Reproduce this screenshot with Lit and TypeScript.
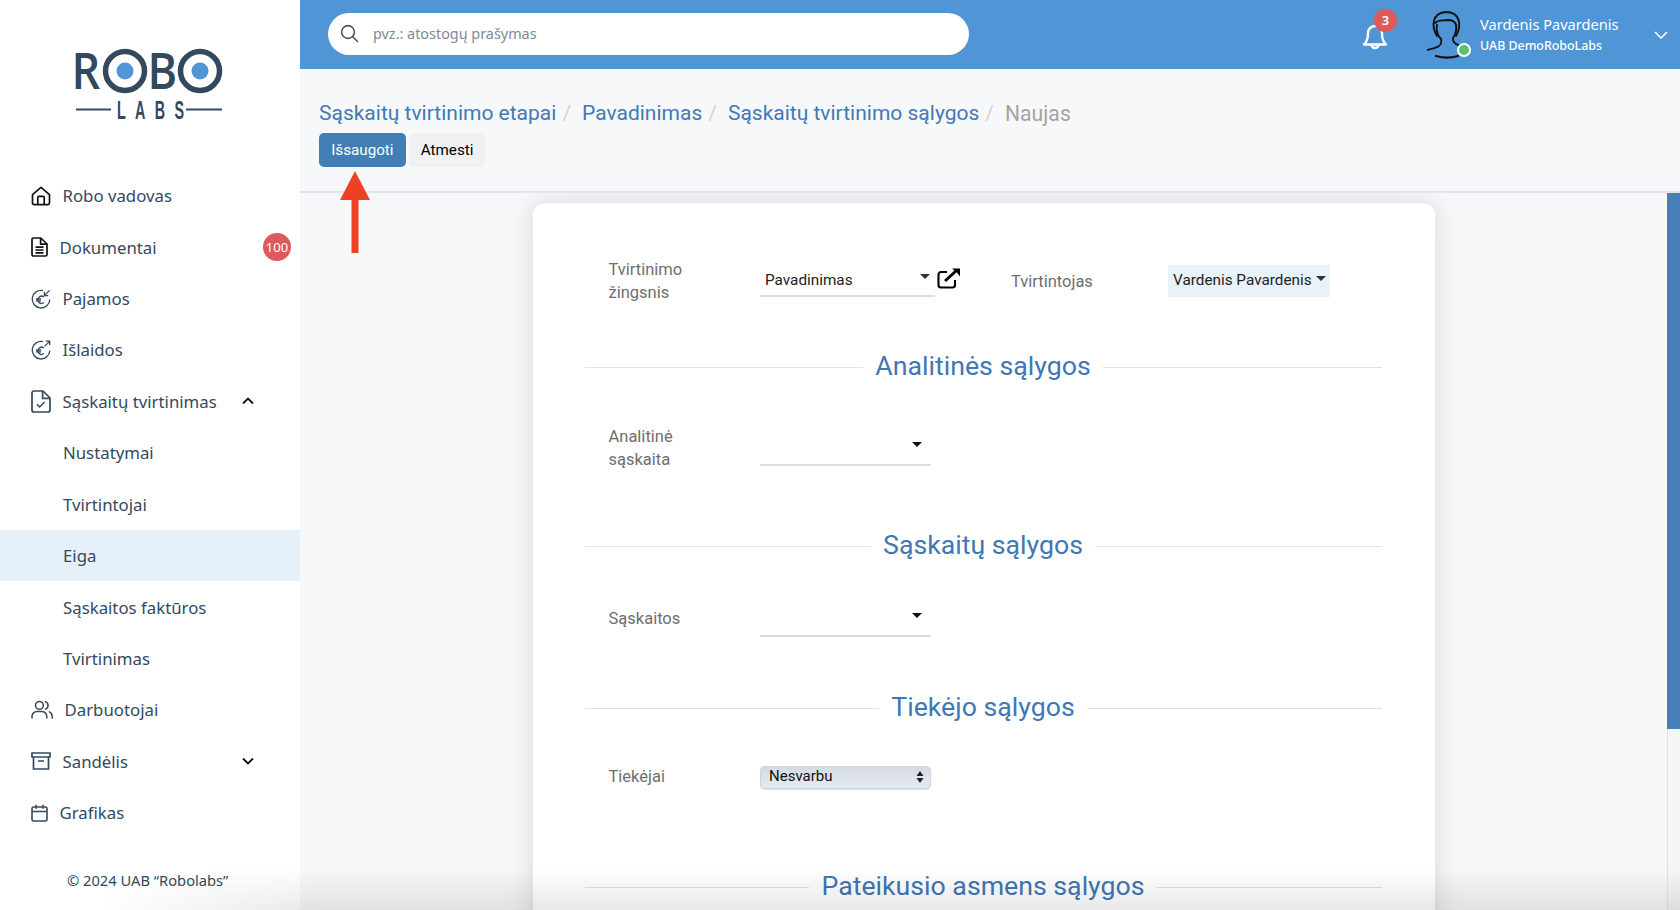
import { LitElement, html, css } from 'lit';
import { customElement } from 'lit/decorators.js';

const chevronUp = html`<svg class="chev" width="14" height="14" viewBox="0 0 14 14"><path d="M2 9.5 7 4.5l5 5" fill="none" stroke="#111" stroke-width="1.8"/></svg>`;
const chevronDown = html`<svg class="chev" width="14" height="14" viewBox="0 0 14 14"><path d="M2 4.5 7 9.5l5-5" fill="none" stroke="#111" stroke-width="1.8"/></svg>`;

const icons = {
  home: html`<svg width="20" height="20" viewBox="0 0 20 20" fill="none" stroke="#111" stroke-width="1.7" stroke-linejoin="round"><path d="M1.5 8.6 10 1.4l8.5 7.2V17a1.6 1.6 0 0 1-1.6 1.6H3.1A1.6 1.6 0 0 1 1.5 17z"/><path d="M6.8 18.5v-7.2a1 1 0 0 1 1-1h4.4a1 1 0 0 1 1 1v7.2"/></svg>`,
  doc: html`<svg width="17" height="20" viewBox="0 0 17 20" fill="none" stroke="#111" stroke-width="1.7" stroke-linejoin="round"><path d="M1 2.6A1.6 1.6 0 0 1 2.6 1h7.2L16 7v10.4a1.6 1.6 0 0 1-1.6 1.6H2.6A1.6 1.6 0 0 1 1 17.4z"/><path d="M9.6 1v6.2H16M4.5 10.2h8M4.5 13h8M4.5 15.8h8"/></svg>`,
  income: html`<svg width="20" height="20" viewBox="0 0 20 20" fill="none" stroke="#34495e" stroke-width="1.3"><path d="M12 1.6A8.8 8.8 0 1 0 18.8 10.5"/><path d="M18.6 1.4 13.6 6.4M13.4 2.8v3.8h3.8"/><path d="M12.8 8a3.6 3.6 0 1 0 0 5.6M5 10h5M5 11.8h5"/></svg>`,
  expense: html`<svg width="20" height="20" viewBox="0 0 20 20" fill="none" stroke="#34495e" stroke-width="1.3"><path d="M12 1.6A8.8 8.8 0 1 0 18.8 10.5"/><path d="M13.6 6.4 18.6 1.4M14.8 1.2h3.9v3.9"/><path d="M12.8 8a3.6 3.6 0 1 0 0 5.6M5 10h5M5 11.8h5"/></svg>`,
  check: html`<svg width="20" height="23" viewBox="0 0 20 23" fill="none" stroke="#34495e" stroke-width="1.7" stroke-linejoin="round"><path d="M1 3a2 2 0 0 1 2-2h9l7 7v12a2 2 0 0 1-2 2H3a2 2 0 0 1-2-2z"/><path d="M11.6 1v7.4H19"/><path d="M6 14.4 8.6 17l5-5" stroke-width="1.5"/></svg>`,
  users: html`<svg width="22" height="20" viewBox="0 0 22 20" fill="none" stroke="#34495e" stroke-width="1.5" stroke-linecap="round"><circle cx="8.4" cy="5.4" r="3.9"/><path d="M1 18v-1.6a5 5 0 0 1 5-5h4.8a5 5 0 0 1 5 5V18M14.4 1.7a3.9 3.9 0 0 1 0 7.4M18.4 11.8a5 5 0 0 1 2.8 4.5V18"/></svg>`,
  box: html`<svg width="20" height="18" viewBox="0 0 20 18" fill="none" stroke="#34495e" stroke-width="1.7"><path d="M1 1h18v4H1zM2.5 5v12h15V5M7 9h6"/></svg>`,
  calendar: html`<svg width="17" height="18" viewBox="0 0 17 18" fill="none" stroke="#34495e" stroke-width="1.6"><rect x="1" y="3" width="15" height="14" rx="1.6"/><path d="M1 7.5h15M5 .8v4M12 .8v4"/></svg>`,
};

const navItems = [
  { label: 'Robo vadovas', icon: icons.home },
  { label: 'Dokumentai', icon: icons.doc, badge: '100' },
  { label: 'Pajamos', icon: icons.income },
  { label: 'Išlaidos', icon: icons.expense },
  { label: 'Sąskaitų tvirtinimas', icon: icons.check, chevron: chevronUp },
  { label: 'Nustatymai', sub: true },
  { label: 'Tvirtintojai', sub: true },
  { label: 'Eiga', sub: true, active: true },
  { label: 'Sąskaitos faktūros', sub: true },
  { label: 'Tvirtinimas', sub: true },
  { label: 'Darbuotojai', icon: icons.users },
  { label: 'Sandėlis', icon: icons.box, chevron: chevronDown },
  { label: 'Grafikas', icon: icons.calendar },
];

@customElement('app-root')
export class AppRoot extends LitElement {
  static styles = css`
    :host {
      display: block;
      position: relative;
      width: 1680px;
      height: 910px;
      overflow: hidden;
      background: #f7f8fa;
      font-family: Roboto, 'Liberation Sans', sans-serif;
    }
    .page {
      display: flex;
      height: 100%;
    }

    .sidebar {
      width: 300px;
      flex: none;
      background: #fff;
      color: #34495e;
      font-family: 'Noto Sans', 'Open Sans', sans-serif;
      font-size: 16.8px;
    }
    .logo {
      height: 170px;
      padding: 24px 0 0 72px;
      box-sizing: border-box;
    }
    .logo svg {
      display: block;
    }
    .item {
      display: flex;
      align-items: center;
      gap: 11.5px;
      height: 51.43px;
      padding-left: 31px;
      padding-right: 9px;
      box-sizing: border-box;
    }
    .item.sub {
      padding-left: 63px;
    }
    .item.active {
      background: #e6f0f8;
    }
    .item svg {
      flex: none;
    }
    .item .chev {
      margin-left: auto;
      margin-right: 36px;
    }
    .badge {
      margin-left: auto;
      width: 28px;
      height: 28px;
      border-radius: 50%;
      background: #de5a5a;
      color: #fff;
      font-size: 13px;
      display: flex;
      align-items: center;
      justify-content: center;
    }
    .copyright {
      margin-top: 32px;
      padding-left: 67px;
      font-size: 14.7px;
    }

    .main {
      flex: 1;
      min-width: 0;
      display: flex;
      flex-direction: column;
    }
    .topbar {
      height: 69px;
      flex: none;
      background: #5095d6;
      display: flex;
      align-items: center;
      color: #fff;
      font-family: 'Noto Sans', 'Open Sans', sans-serif;
    }
    .search {
      margin: -2px 0 0 28px;
      width: 641px;
      height: 42px;
      border-radius: 21px;
      background: #fff;
      display: flex;
      align-items: center;
      box-sizing: border-box;
      padding-left: 12px;
      gap: 14px;
      color: #7f8a93;
      font-size: 14.4px;
    }
    .bell {
      position: relative;
      margin-left: auto;
      margin-right: -1px;
      width: 26px;
      height: 26px;
      margin-top: 4px;
    }
    .bell .count {
      position: absolute;
      left: 12px;
      top: -15px;
      width: 23px;
      height: 23px;
      border-radius: 50%;
      background: #de5a5a;
      color: #fff;
      font-size: 13px;
      font-weight: 600;
      display: flex;
      align-items: center;
      justify-content: center;
    }
    .avatar {
      position: relative;
      margin-left: 40px;
      width: 46px;
      height: 48px;
    }
    .avatar .dot {
      position: absolute;
      left: 30px;
      top: 32px;
      width: 10px;
      height: 10px;
      border-radius: 50%;
      background: #5cc16d;
      border: 2px solid #fff;
    }
    .user {
      margin-left: 7px;
      width: 174px;
      line-height: 21px;
    }
    .user .name {
      font-size: 14.6px;
      margin-top: 1px;
    }
    .user .org {
      font-size: 12.4px;
      font-weight: 500;
    }
    .caret-user {
      margin-right: 12px;
    }

    .head {
      height: 124px;
      flex: none;
      box-sizing: border-box;
      padding: 29px 0 0 19px;
      border-bottom: 2px solid #e4e6e9;
    }
    .crumbs {
      display: flex;
      align-items: center;
      height: 30px;
      font-size: 21px;
      color: #4379b5;
    }
    .crumbs .sep {
      color: #d2d4d6;
      margin: 0 11px 0 6px;
    }
    .crumbs .current {
      color: #a8a39e;
      font-size: 21.2px;
    }
    .actions {
      display: flex;
      gap: 3.5px;
      margin-top: 5px;
    }
    .btn {
      height: 34px;
      padding: 0 11.6px;
      border-radius: 5px;
      display: flex;
      align-items: center;
      font-size: 15.2px;
      background: #f0f1f3;
      color: #000;
    }
    .btn.primary {
      padding: 0 12.2px;
      background: #437db5;
      color: #fff;
    }

    .body {
      flex: 1;
      min-height: 0;
      display: flex;
    }
    .scroll {
      flex: 1;
      min-width: 0;
      overflow: hidden;
      display: flex;
      justify-content: center;
    }
    .bar {
      width: 13px;
      flex: none;
      background: #f4f5f5;
      border-left: 1px solid #e2e4e5;
      box-sizing: border-box;
    }
    .thumb {
      height: 536px;
      margin-left: -1px;
      background: #4580b8;
    }
    .card {
      width: 902px;
      height: 900px;
      margin-top: 10px;
      box-sizing: border-box;
      padding: 54px 53px 0 52px;
      background: #fff;
      border-radius: 12px;
      box-shadow: 0 0 26px rgba(0, 0, 0, 0.13);
    }
    .row {
      display: flex;
      align-items: center;
      height: 48px;
      padding-left: 24px;
      font-size: 16.5px;
      line-height: 23.5px;
      color: #6e6e6e;
    }
    .row .label {
      width: 151.5px;
      flex: none;
    }
    .select {
      position: relative;
      box-sizing: border-box;
      width: 171px;
      height: 36px;
      border-bottom: 2px solid #dcdcdc;
    }
    .select.first {
      width: 175px;
      height: 32px;
      padding: 5px 5px 0;
      font-size: 15.3px;
      line-height: 20px;
      color: #222;
    }
    .caret {
      position: absolute;
      right: 5px;
      top: 9px;
      width: 0;
      height: 0;
      border-left: 5px solid transparent;
      border-right: 5px solid transparent;
      border-top: 5px solid #333;
    }
    .select .caret.lower {
      top: 12px;
      right: 9px;
      border-top-color: #111;
    }
    .link {
      margin-left: 2px;
      margin-top: -7px;
      color: #000;
    }
    .approver-label {
      margin-left: 50px;
      width: 157px;
      padding-top: 1px;
    }
    .approver {
      position: relative;
      box-sizing: border-box;
      width: 162px;
      height: 32px;
      padding-left: 5px;
      background: #e8f2fb;
      color: #222;
      font-size: 15.3px;
      line-height: 30px;
    }
    .approver .caret {
      right: 4px;
      top: 11px;
    }
    .native {
      box-sizing: border-box;
      width: 171px;
      height: 23px;
      padding: 0 7px 0 9px;
      border-radius: 5px;
      display: flex;
      align-items: center;
      justify-content: space-between;
      color: #111;
      font-size: 15px;
      background: linear-gradient(#d5dbe3, #e6ebf1);
      box-shadow: inset 0 0 0 1px #cfd5dc, 0 1px 1px rgba(0, 0, 0, 0.12);
    }
    .title {
      display: flex;
      align-items: center;
      gap: 12px;
      height: 44px;
      font-size: 26.7px;
      color: #4077b5;
      white-space: nowrap;
    }
    .title::before,
    .title::after {
      content: '';
      flex: 1;
      height: 1px;
      margin-top: 3px;
      background: #dfe1e3;
    }
    .mt39 { margin-top: 39px; }
    .mt36 { margin-top: 36px; }
    .mt51 { margin-top: 51px; }
    .mt28 { margin-top: 28px; }
    .mt42 { margin-top: 42px; }
    .mt24 { margin-top: 24px; }
    .mt63 { margin-top: 63px; }

    .arrow {
      position: absolute;
      left: 340px;
      top: 171px;
    }
    .fade {
      position: absolute;
      left: 0;
      right: 0;
      bottom: 0;
      height: 42px;
      pointer-events: none;
      background: linear-gradient(rgba(0, 0, 0, 0), rgba(0, 0, 0, 0.09));
      -webkit-mask-image: linear-gradient(90deg, transparent 100px, #000 320px);
      mask-image: linear-gradient(90deg, transparent 100px, #000 320px);
    }
  `;

  private renderSidebar() {
    return html`
      <aside class="sidebar">
        <div class="logo">
          <svg width="156" height="110" viewBox="72 24 156 110">
            <text transform="translate(71.5 89) scale(.9 1)" font-family="Open Sans, sans-serif" font-weight="600" font-size="50" fill="#34495e">R</text>
            <circle cx="125" cy="71" r="19.5" fill="none" stroke="#34495e" stroke-width="5.5"/>
            <circle cx="125" cy="71" r="8.5" fill="#5095d6"/>
            <text transform="translate(147.5 89) scale(.9 1)" font-family="Open Sans, sans-serif" font-weight="600" font-size="50" fill="#34495e">B</text>
            <circle cx="200" cy="71" r="19.5" fill="none" stroke="#34495e" stroke-width="5.5"/>
            <circle cx="200" cy="71" r="8.5" fill="#5095d6"/>
            <path d="M76 109.5h35M186 109.5h36" stroke="#34495e" stroke-width="2"/>
            <text transform="translate(117 119) scale(.55 1)" font-family="Liberation Sans, sans-serif" font-weight="700" font-size="26" letter-spacing="17" fill="#34495e">LABS</text>
          </svg>
        </div>
        ${navItems.map(
          (item) => html`
            <div class="item ${item.sub ? 'sub' : ''} ${item.active ? 'active' : ''}">
              ${item.icon ?? ''}
              <span>${item.label}</span>
              ${item.badge ? html`<span class="badge">${item.badge}</span>` : ''}
              ${item.chevron ?? ''}
            </div>
          `
        )}
        <div class="copyright">© 2024 UAB “Robolabs”</div>
      </aside>
    `;
  }

  private renderTopbar() {
    return html`
      <header class="topbar">
        <div class="search">
          <svg width="19" height="19" viewBox="0 0 19 19" fill="none" stroke="#555" stroke-width="1.6" stroke-linecap="round"><circle cx="8" cy="8" r="6.4"/><path d="m12.7 12.7 4.8 4.8"/></svg>
          <span>pvz.: atostogų prašymas</span>
        </div>
        <div class="bell">
          <svg width="26" height="26" viewBox="0 0 26 26" fill="none" stroke="#fff" stroke-width="2.4" stroke-linejoin="round"><path d="M13 2a7 7 0 0 0-7 7c0 6-1 9-4 11.5h22C21 18 20 15 20 9a7 7 0 0 0-7-7z"/><path d="M9.5 21a3.5 3 0 0 0 7 0"/></svg>
          <span class="count">3</span>
        </div>
        <div class="avatar">
          <svg width="46" height="48" viewBox="0 0 46 48" fill="none" stroke="#111" stroke-width="1.9" stroke-linecap="round">
            <path d="M10 25C4 15 5 2 19 1c14 0 16 13 10 24"/>
            <path d="M8 12c4-4 7-2 13-3 4 0 7 1 8 5"/>
            <path d="M10 14c-1 6 1 11 4 14 1 4-1 7-4 8-3 2-7 2-10 3"/>
            <path d="M29 14c1 6-1 10-3 13-1 4 2 6 7 8"/>
            <path d="M9 45c7 2 15 2 22 0" stroke-width="2.3"/>
          </svg>
          <span class="dot"></span>
        </div>
        <div class="user">
          <div class="name">Vardenis Pavardenis</div>
          <div class="org">UAB DemoRoboLabs</div>
        </div>
        <svg class="caret-user" width="14" height="8" viewBox="0 0 14 8" fill="none" stroke="#fff" stroke-width="1.6"><path d="m1 1 6 6 6-6"/></svg>
      </header>
    `;
  }

  private renderHead() {
    return html`
      <div class="head">
        <div class="crumbs">
          <span>Sąskaitų tvirtinimo etapai</span><span class="sep">/</span>
          <span>Pavadinimas</span><span class="sep">/</span>
          <span>Sąskaitų tvirtinimo sąlygos</span><span class="sep">/</span>
          <span class="current">Naujas</span>
        </div>
        <div class="actions">
          <div class="btn primary">Išsaugoti</div>
          <div class="btn">Atmesti</div>
        </div>
      </div>
    `;
  }

  private renderCard() {
    return html`
      <section class="card">
        <div class="row">
          <div class="label">Tvirtinimo<br />žingsnis</div>
          <div class="select first">Pavadinimas<span class="caret"></span></div>
          <svg class="link" width="24" height="22" viewBox="0 0 24 22" fill="none" stroke="currentColor" stroke-width="2.1" stroke-linejoin="round"><path d="M18 13v5a2.5 2.5 0 0 1-2.5 2.5H4A2.5 2.5 0 0 1 1.5 18V7.5A2.5 2.5 0 0 1 4 5h6"/><path d="m8 14 12-11" stroke-width="3"/><path d="M15 1.5h8v8l-3.500-4.500z" fill="currentColor" stroke="none"/></svg>
          <div class="approver-label">Tvirtintojas</div>
          <div class="approver">Vardenis Pavardenis<span class="caret"></span></div>
        </div>

        <div class="title mt39">Analitinės sąlygos</div>
        <div class="row mt36">
          <div class="label">Analitinė<br />sąskaita</div>
          <div class="select"><span class="caret lower"></span></div>
        </div>

        <div class="title mt51">Sąskaitų sąlygos</div>
        <div class="row mt28">
          <div class="label">Sąskaitos</div>
          <div class="select"><span class="caret lower"></span></div>
        </div>

        <div class="title mt42">Tiekėjo sąlygos</div>
        <div class="row mt24">
          <div class="label">Tiekėjai</div>
          <div class="native">
            <span>Nesvarbu</span>
            <svg width="8" height="14" viewBox="0 0 8 14" fill="#222"><path d="M4 1 7.5 6H.5zM4 13 .5 8h7z"/></svg>
          </div>
        </div>

        <div class="title mt63">Pateikusio asmens sąlygos</div>
      </section>
    `;
  }

  render() {
    return html`
      <div class="page">
        ${this.renderSidebar()}
        <div class="main">
          ${this.renderTopbar()} ${this.renderHead()}
          <div class="body">
            <div class="scroll">${this.renderCard()}</div>
            <div class="bar"><div class="thumb"></div></div>
          </div>
        </div>
      </div>
      <svg class="arrow" width="30" height="82" viewBox="0 0 30 82"><path d="M15 0 30 29H18.5V82h-7V29H0z" fill="#ee4023"/></svg>
      <div class="fade"></div>
    `;
  }
}
